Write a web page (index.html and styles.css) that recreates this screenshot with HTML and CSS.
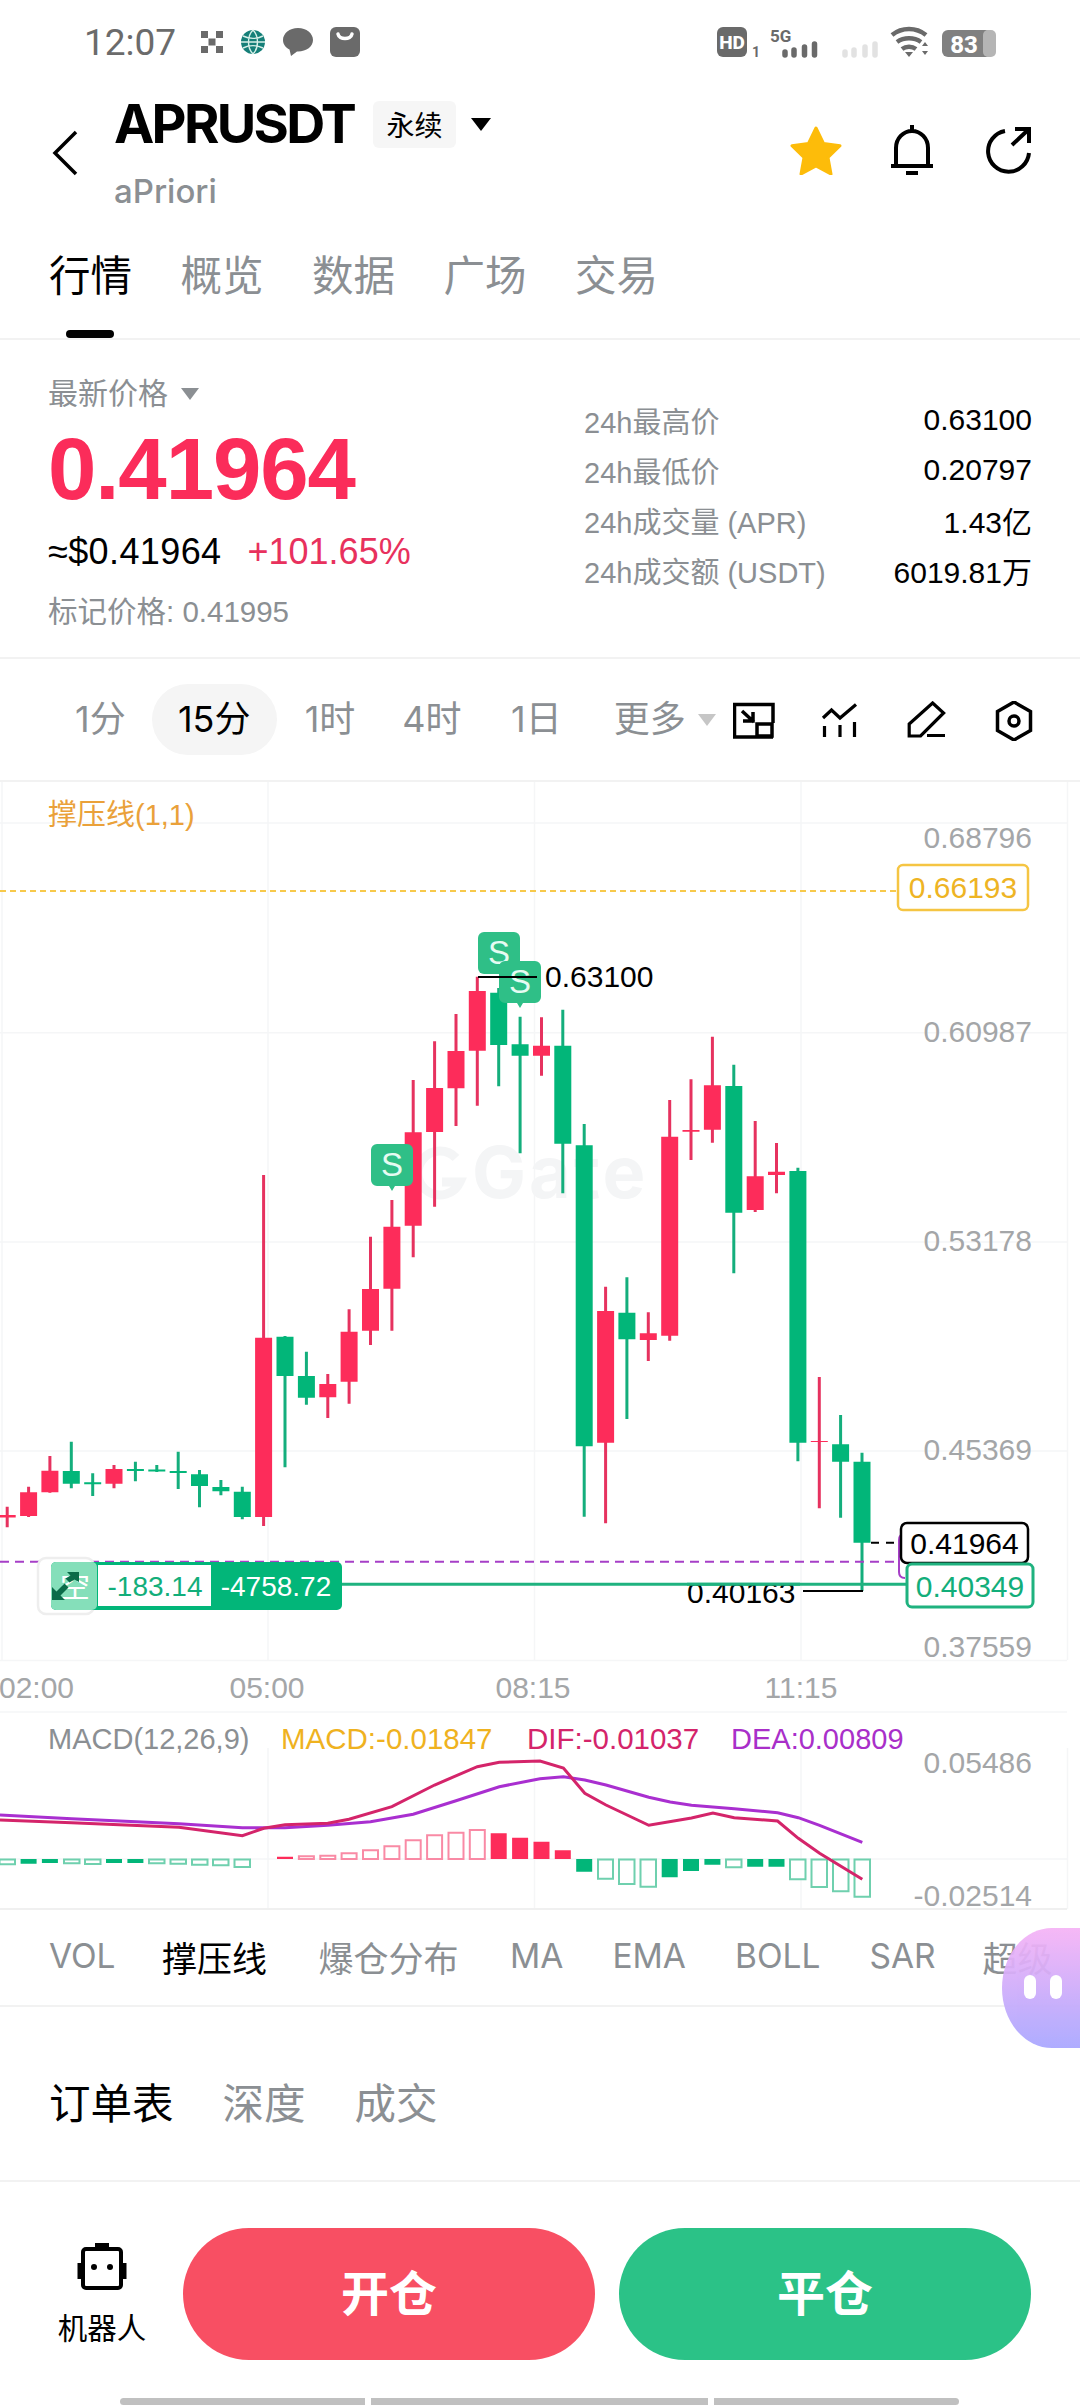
FILE: index.html
```html
<!DOCTYPE html>
<html lang="zh">
<head>
<meta charset="utf-8">
<title>APRUSDT</title>
<link rel="stylesheet" href="styles.css">
</head>
<body>
<div class="page">
  <div class="status">
    <span class="clock">12:07</span>
    <svg class="st-ic" width="24" height="24" viewBox="0 0 24 24"><path class="st-fill" d="M1 1h7v7H1zM16 1h7v7h-7zM8.500 8.500h7v7h-7zM1 16h7v7H1zM16 16h7v7h-7z"/></svg>
    <svg class="st-ic" width="26" height="26" viewBox="0 0 26 26"><circle cx="13" cy="13" r="12" class="globe"/><path class="globe-l" d="M1 13h24M13 1c-6 6-6 18 0 24M13 1c6 6 6 18 0 24M3 7c6 3 14 3 20 0M3 19c6-3 14-3 20 0"/></svg>
    <svg class="st-ic" width="32" height="32" viewBox="0 0 32 32"><path class="st-fill" d="M16 2C7.500 2 1 7.500 1 14c0 4 2.500 7.500 6.500 9.500L9 30l6-4.500h1c8.500 0 15-5 15-11.500S24.500 2 16 2z"/></svg>
    <svg class="st-ic" width="30" height="30" viewBox="0 0 30 30"><rect class="st-fill" width="30" height="30" rx="6"/><path class="st-white" d="M8 7c1 6 13 6 14 0"/></svg>
    <svg class="st-right" width="290" height="36" viewBox="0 0 290 36">
      <rect class="st-fill" x="0" y="3" width="30" height="30" rx="6"/>
      <text class="st-hd" x="15" y="25" text-anchor="middle">HD</text>
      <text class="st-sm" x="35" y="33">1</text>
      <text class="st-5g" x="53" y="18">5G</text>
      <path class="st-bar" d="M68 31v-3M77 31v-5M87.500 31v-8M97.500 31v-11"/>
      <path class="st-bar faint" d="M128 31v-3M137 31v-5M148 31v-8M158 31v-11"/>
      <path class="st-wifi" d="M175 11c10-8 24-8 34 0M180 18c7-5 17-5 24 0M185 25c4-3 10-3 14 0"/>
      <path class="st-fill" d="M192 33l-4-5h8zM205 22l3-4 3 4zM205 27l3 4 3-4z"/>
      <rect class="st-batt" x="225" y="6" width="50" height="27" rx="6"/>
      <rect class="st-batt-e" x="266" y="6" width="13" height="27" rx="5"/>
      <text class="st-pct" x="247" y="29" text-anchor="middle">83</text>
    </svg>
  </div>

  <header class="head">
    <svg class="back" width="28" height="48" viewBox="0 0 28 48"><path d="M25 3L4 24l21 21"/></svg>
    <div class="title">
      <div class="title-row">
        <span class="symbol">APRUSDT</span>
        <span class="badge">永续</span>
        <span class="caret-dark"></span>
      </div>
      <div class="coin">aPriori</div>
    </div>
    <div class="head-icons">
      <svg class="ic-star" width="54" height="50" viewBox="0 0 54 50"><path class="star" d="M27 3l7.500 15.500 16.500 2.300-12 11.700 3 16.500L27 41l-15 8 3-16.500L3 20.800l16.500-2.300z"/></svg>
      <svg class="ic-bell" width="44" height="52" viewBox="0 0 44 52"><path class="ln" d="M6 41V24a16 17 0 0 1 32 0v17M1 42h42M16 49h12M22 1v5"/></svg>
      <svg class="ic-share" width="46" height="48" viewBox="0 0 46 48"><path class="ln" d="M20 5a20.500 20.500 0 1 0 24 22M27 19L43 4M30 3h14v14"/></svg>
    </div>
  </header>

  <nav class="tabs">
    <span class="tab on">行情</span><span class="tab">概览</span><span class="tab">数据</span><span class="tab">广场</span><span class="tab">交易</span>
    <i class="tab-bar"></i>
  </nav>

  <section class="stats">
    <div class="price-col">
      <div class="latest">最新价格<span class="caret-grey"></span></div>
      <div class="price">0.41964</div>
      <div class="sub"><span class="usd">≈$0.41964</span><span class="chg">+101.65%</span></div>
      <div class="mark">标记价格: 0.41995</div>
    </div>
    <dl class="kv">
      <div class="kv-row"><dt>24h最高价</dt><dd>0.63100</dd></div>
      <div class="kv-row"><dt>24h最低价</dt><dd>0.20797</dd></div>
      <div class="kv-row"><dt>24h成交量 (APR)</dt><dd>1.43亿</dd></div>
      <div class="kv-row"><dt>24h成交额 (USDT)</dt><dd>6019.81万</dd></div>
    </dl>
  </section>

  <section class="intervals">
    <span class="iv i1">1分</span>
    <span class="iv on">15分</span>
    <span class="iv i3">1时</span>
    <span class="iv i4">4时</span>
    <span class="iv i5">1日</span>
    <span class="iv more">更多<span class="caret-light"></span></span>
    <svg class="tools" width="300" height="40" viewBox="733 701 300 40">
      <path class="tool" d="M773 723v-18.500h-38.500v32.500h38.500"/>
      <rect class="tool" x="757" y="724" width="15" height="12"/>
      <path class="tool" d="M742 711l12 11M743 721h10v-9"/>
      <path class="tool2" d="M823 718l8.500-8 8.500 8 16-13.500M824.500 726v11M840 725v12M854.500 722v15"/>
      <path class="tool2" d="M932.600 703l11 10-23 23h-11.400v-12zM927 735.500h18"/>
      <path class="tool" d="M1014 702l16.500 9.500v19l-16.500 9.500-16.500-9.500v-19z"/>
      <circle class="tool" cx="1014" cy="721" r="5"/>
    </svg>
  </section>

  <svg class="chart" width="1080" height="1127" viewBox="0 782 1080 1127">
    <path class="grid" d="M0 823H1067M0 1032.700H1067M0 1242H1067M0 1451H1067M0 1660.500H1067M0 1712H1067M2 782V1660M268 782V1660M534.500 782V1660M801 782V1660M1067.500 782V1660M268 1748V1909M534.500 1748V1909M801 1748V1909M1067.500 1748V1909M0 1859H1067"/>
    <path class="grid-b" d="M0 1909H1067"/>

    <text class="mark-wm" x="472" y="1198">Gate</text>
    <path class="wm-ring" d="M456 1158a22 22 0 1 0 4 24h-18"/>

    <text class="legend orange" x="48" y="825">撑压线(1,1)</text>
    <path class="dash-y" d="M0 891H897"/>
    <g class="ax">
      <text x="1032" y="848" text-anchor="end">0.68796</text>
      <text x="1032" y="1042" text-anchor="end">0.60987</text>
      <text x="1032" y="1251" text-anchor="end">0.53178</text>
      <text x="1032" y="1460" text-anchor="end">0.45369</text>
      <text x="1032" y="1657" text-anchor="end">0.37559</text>
      <text x="36.500" y="1698" text-anchor="middle">02:00</text>
      <text x="267" y="1698" text-anchor="middle">05:00</text>
      <text x="533" y="1698" text-anchor="middle">08:15</text>
      <text x="801" y="1698" text-anchor="middle">11:15</text>
      <text x="1032" y="1773" text-anchor="end">0.05486</text>
      <text x="1032" y="1906" text-anchor="end">-0.02514</text>
    </g>
    <rect class="lbl-y" x="898" y="865" width="130" height="45" rx="5"/>
    <text class="lbl-yt" x="963" y="898" text-anchor="middle">0.66193</text>

    <path class="wick red" d="M7.200 1506.700V1527.300M28.600 1486.700V1517M49.900 1456V1492.700M114 1465V1488.300M263.600 1175V1526M327.800 1374V1418M349.100 1309.300V1403.700M370.500 1236.700V1345M391.900 1200V1330.700M413.200 1080V1257.300M434.600 1041.300V1206.700M456 1014V1126M477.300 976.700V1105.700M541.500 1017.300V1075.700M605.600 1286.700V1523.300M648.300 1312.300V1361M669.700 1100V1340.700M691 1079.300V1160M712.400 1036.700V1142.700M755.200 1121V1212M776.500 1143V1193.300M819.300 1377V1508.300"/>
    <path class="body red" d="M7.200 1515V1517.500M28.600 1492.300V1516M49.900 1470.700V1492.300M114 1469V1483.700M263.600 1337.700V1517M327.800 1384V1397.300M349.100 1331.700V1381.700M370.500 1289V1330.700M391.900 1226.700V1288.700M413.200 1132.300V1225.700M434.600 1088V1132M456 1051V1088.300M477.300 991V1050.700M541.500 1045.700V1055.700M605.600 1311V1442.700M648.300 1333.300V1340M669.700 1136.700V1335.700M691 1130V1131.700M712.400 1085.300V1129.700M755.200 1176.300V1210M776.500 1171.700V1175M819.300 1441V1442"/>
    <path class="wick green" d="M71.300 1441.700V1488.300M92.700 1473.300V1496M135.400 1461.700V1481.300M156.800 1465V1472M178.200 1451.700V1489M199.500 1470V1507.300M220.900 1480V1495.300M242.300 1486.700V1519.300M285 1336V1467.300M306.400 1351.700V1404.700M498.700 988V1086.300M520.100 1016.700V1153.300M562.800 1009.700V1193.300M584.200 1124V1516.700M626.900 1277.300V1419M733.800 1064.700V1273.300M797.900 1167.700V1461.300M840.600 1415V1517.700M862 1452.700V1591"/>
    <path class="body green" d="M71.300 1471V1483.700M92.700 1482.300V1484.300M135.400 1469V1471M156.800 1469.500V1471.500M178.200 1471V1473M199.500 1474.300V1486M220.900 1487V1491.300M242.300 1491.700V1517M285 1336.700V1376M306.400 1376V1397.700M498.700 992.700V1045M520.100 1044.300V1055.700M562.800 1045.700V1143.700M584.200 1145.300V1446.300M626.900 1312.700V1339.300M733.800 1086V1212.700M797.900 1171V1442.700M840.600 1444.300V1461.700M862 1461.700V1542.700"/>

    <path class="sig" d="M371 1150a6 6 0 0 1 6-6h30a6 6 0 0 1 6 6v30a6 6 0 0 1-6 6h-12l-3 5-3-5h-12a6 6 0 0 1-6-6z"/>
    <text class="sig-t" x="392" y="1176" text-anchor="middle">S</text>
    <path class="sig" d="M478 938a6 6 0 0 1 6-6h30a6 6 0 0 1 6 6v30a6 6 0 0 1-6 6h-30a6 6 0 0 1-6-6z"/>
    <text class="sig-t" x="499" y="964" text-anchor="middle">S</text>
    <path class="sig" d="M499 967a6 6 0 0 1 6-6h30a6 6 0 0 1 6 6v30a6 6 0 0 1-6 6h-12l-3 5-3-5h-12a6 6 0 0 1-6-6z"/>
    <text class="sig-t" x="520" y="993" text-anchor="middle">S</text>
    <path class="hi-line" d="M478 977H537"/>
    <text class="blk" x="545" y="987">0.63100</text>

    <path class="dash-p" d="M0 1561.700H898"/>
    <path class="br-p" d="M905 1534q-6 0-6 6v32q0 6 6 6"/>
    <path class="pos-line" d="M340 1584.300H906"/>
    <path class="hi-line" d="M803 1591H863"/>
    <text class="blk" x="687" y="1603">0.40163</text>
    <path class="pos-line" d="M687 1584.300H800"/>
    <path class="dash-k" d="M871 1542.700H900"/>
    <rect class="lbl-k" x="901" y="1523" width="127" height="40" rx="6"/>
    <text class="blk" x="964.500" y="1554" text-anchor="middle">0.41964</text>
    <rect class="lbl-g" x="907" y="1564" width="126" height="43" rx="5"/>
    <text class="lbl-gt" x="970" y="1597" text-anchor="middle">0.40349</text>

    <rect class="tag-halo" x="38" y="1558" width="56" height="56" rx="8"/>
    <rect class="tag" x="51" y="1562" width="291" height="48" rx="5"/>
    <rect class="tag-l" x="51" y="1562" width="46" height="48" rx="5"/>
    <rect class="tag-w" x="98" y="1565" width="113" height="41"/>
    <text class="tag-k" x="75" y="1597" text-anchor="middle">空</text>
    <text class="tag-a" x="155" y="1596" text-anchor="middle">-183.14</text>
    <text class="tag-b" x="276" y="1596" text-anchor="middle">-4758.72</text>
    <path class="tag-ar" d="M52 1600v-13l4.500 4.500 8-8 4 4-8 8 4.500 4.500z"/>
    <path class="tag-ar2" d="M79 1582v-10H67l3.500 3.500-5 3 4 4 5-3z"/>

    <text class="legend grey" x="48" y="1749">MACD(12,26,9)</text>
    <text class="legend m-o" x="281" y="1749">MACD:-0.01847</text>
    <text class="legend m-p" x="527" y="1749">DIF:-0.01037</text>
    <text class="legend m-v" x="731" y="1749">DEA:0.00809</text>

    <path class="hg" d="M-.500 1859.500H15V1864.300H-.500ZM64 1859.500H79.500V1863.300H64ZM85 1859.500H100.500V1864H85ZM149 1859.500H164.500V1863.300H149ZM170.500 1859.500H186V1863.700H170.500ZM192 1859.500H207.500V1864.700H192ZM213 1859.500H228.500V1865.300H213ZM234.500 1859.500H250V1867H234.500ZM598 1859.500H613V1878.700H598ZM619 1859.500H634.500V1884H619ZM640.500 1859.500H656V1886.700H640.500ZM726 1859.500H741.500V1867.300H726ZM790 1859.500H805.500V1879.300H790ZM811.500 1859.500H827V1887H811.500ZM833 1859.500H848.500V1891.300H833ZM854.500 1859.500H870V1896.700H854.500Z"/>
    <path class="mf green" d="M28.600 1859V1863.700M49.900 1859V1863M114 1859V1863M135.400 1859V1863M584.200 1859V1871.700M669.700 1859V1877.300M691 1859V1871M712.400 1859V1864.700M755.200 1859V1866.700M776.500 1859V1866.700"/>
    <path class="hr" d="M298.900 1859H313.900V1856.300H298.900ZM320.300 1859H335.300V1855.700H320.300ZM341.600 1859H356.600V1853.300H341.600ZM363 1859H378V1850.300H363ZM384.400 1859H399.400V1846.300H384.400ZM405.700 1859H420.700V1840.300H405.700ZM427.100 1859H442.100V1835.300H427.100ZM448.500 1859H463.500V1832.700H448.500ZM469.800 1859H484.800V1830H469.800Z"/>
    <path class="mf red" d="M285 1859V1856.700M498.700 1859V1833.300M520.100 1859V1837.700M541.500 1859V1841.700M562.800 1859V1850.300"/>
    <polyline class="dea" points="0,1815 71.600,1818.700 179,1823.700 242.400,1827.700 285,1827.700 327.800,1825.300 370.500,1821.700 413.200,1814.300 456,1800.700 499.300,1786.700 540,1778.700 563.400,1776.700 584.800,1780 606,1785 648.800,1797.300 670.200,1802 691.500,1805.300 734.200,1808.700 777.600,1812.700 798.300,1817.700 819.600,1825.300 862.300,1842.300"/>
    <polyline class="dif" points="0,1820 71.600,1822.700 179,1827.300 242.400,1835.700 263.800,1828.300 285,1824.700 327.800,1823.300 349,1819.300 391.900,1806.700 434.600,1785 477.300,1766.700 499.300,1762.300 540,1761 563.400,1768 584.800,1793.300 606,1805 648.800,1825.300 691.500,1818 712.900,1813 734.200,1817.700 777.600,1821 798.300,1838.300 819.600,1853.300 862.300,1879.300"/>
  </svg>

  <nav class="inds">
    <span class="ind lat">VOL</span><span class="ind on">撑压线</span><span class="ind wide">爆仓分布</span><span class="ind lat wide">MA</span><span class="ind lat">EMA</span><span class="ind lat">BOLL</span><span class="ind lat">SAR</span><span class="ind last">超级</span>
  </nav>

  <nav class="orders">
    <span class="otab on">订单表</span><span class="otab">深度</span><span class="otab">成交</span>
  </nav>

  <footer class="actions">
    <div class="robot">
      <svg width="50" height="50" viewBox="0 0 50 50"><path class="rb-a" d="M18 2h14v4H18z"/><rect class="rb" x="6" y="8" width="38" height="39" rx="3"/><path class="rb-e" d="M3 22v16M47 22v16"/><circle class="rb-a" cx="17" cy="26" r="3"/><circle class="rb-a" cx="33" cy="26" r="3"/></svg>
      <span class="robot-t">机器人</span>
    </div>
    <button class="btn open">开仓</button>
    <button class="btn close">平仓</button>
  </footer>

  <div class="navbar"><i class="seg s1"></i><i class="seg s2"></i><i class="seg s3"></i></div>

  <div class="blob"><i class="eye"></i><i class="eye"></i></div>
</div>
</body>
</html>
```
FILE: styles.css
```css
* { box-sizing: border-box; margin: 0; padding: 0; }
html, body { width: 1080px; height: 2408px; overflow: hidden; background: #fff; }
body { font-family: "Liberation Sans", "Noto Sans CJK SC", sans-serif; color: #000; }
.page { position: relative; width: 1080px; height: 2408px; overflow: hidden; display: flex; flex-direction: column; }

/* status bar */
.status { height: 85px; display: flex; align-items: center; padding: 0 73px 1px 84px; }
.clock { font-size: 37px; color: #6b6b6b; width: 116px; font-family: Roboto, sans-serif; }
.st-ic { flex: none; margin-right: 16px; }
.st-fill { fill: #6a6a6a; }
.st-white { fill: none; stroke: #fff; stroke-width: 3.5; stroke-linecap: round; }
.globe { fill: #157f78; }
.globe-l { fill: none; stroke: #d6efe8; stroke-width: 1.4; }
.st-right { margin-left: auto; flex: none; }
.st-hd { font: 800 19px Roboto, sans-serif; fill: #fff; }
.st-sm { font: 700 14px Roboto, sans-serif; fill: #6a6a6a; }
.st-5g { font: 700 17px Roboto, sans-serif; fill: #6a6a6a; }
.st-bar { stroke: #6a6a6a; stroke-width: 5.500; stroke-linecap: round; fill: none; }
.st-bar.faint { stroke: #e2e2e2; }
.st-wifi { stroke: #6a6a6a; stroke-width: 4.500; fill: none; }
.st-batt { fill: #808080; }
.st-batt-e { fill: #b5b5b5; }
.st-pct { font: 800 24px Roboto, sans-serif; fill: #fff; }

/* header */
.head { height: 125px; display: flex; position: relative; }
.back { margin: 44px 0 0 51px; flex: none; }
.back path { fill: none; stroke: #000; stroke-width: 3.500; }
.title { margin-left: 35px; padding-top: 13px; }
.title-row { display: flex; align-items: center; height: 52px; }
.symbol { font-family: Inter, sans-serif; font-size: 54px; font-weight: 700; letter-spacing: -2.700px; line-height: 52px; }
.badge { margin-left: 19px; width: 83px; height: 47px; border-radius: 6px; background: #f6f6f6; font-size: 28px; display: flex; align-items: center; justify-content: center; }
.caret-dark { margin-left: 15px; border: 10px solid transparent; border-top: 13px solid #000; border-bottom: 0; }
.coin { font-family: Inter, sans-serif; margin-top: 22px; font-size: 33px; line-height: 38px; color: #8b8f93; font-weight: 500; }
.head-icons { margin-left: auto; display: flex; align-items: center; padding: 40px 49px 36px 0; height: 125px; }
.ic-bell { margin-left: 47px; }
.ic-share { margin-left: 51px; }
.star { fill: #fdbc0a; stroke: #fdbc0a; stroke-width: 3; stroke-linejoin: round; }
.ln { fill: none; stroke: #000; stroke-width: 4; }

/* tabs */
.tabs { height: 130px; display: flex; gap: 48.500px; padding: 43px 0 0 49px; position: relative; border-bottom: 2px solid #f2f2f2; }
.tab { font-size: 41.500px; line-height: 47px; height: 47px; color: #8b8f93; }
.tab.on { color: #000; }
.tab-bar { position: absolute; left: 66px; bottom: 0; width: 48px; height: 8px; border-radius: 4px; background: #000; }

/* stats */
.stats { height: 319px; display: flex; border-bottom: 2px solid #f2f2f2; padding: 0 48px 0 48px; }
.price-col { width: 536px; padding-top: 36px; }
.latest { font-size: 30px; line-height: 36px; color: #8b8f93; display: flex; align-items: center; }
.caret-grey { margin-left: 13px; border: 9px solid transparent; border-top: 12px solid #8b8f93; border-bottom: 0; }
.price { margin-top: 7px; font-size: 87px; font-weight: 700; letter-spacing: -1.100px; line-height: 100px; color: #fb2c5a; }
.sub { margin-top: 12px; display: flex; gap: 26px; font-size: 36px; line-height: 42px; }
.usd { letter-spacing: .4px; }
.chg { color: #e8315d; }
.mark { margin-top: 21px; font-size: 29.500px; line-height: 36px; color: #8b8f93; }
.kv { flex: 1; padding-top: 55px; }
.kv-row { height: 50px; display: flex; justify-content: space-between; align-items: center; font-size: 29.500px; }
.kv-row dt { color: #8b8f93; font-size: 29px; }
.kv-row dd { color: #000; font-size: 30px; }

/* intervals */
.intervals { height: 123px; display: flex; align-items: center; position: relative; padding-left: 75px; border-bottom: 2px solid #f2f2f2; font: 36px Inter, "Noto Sans CJK SC", sans-serif; color: #8b8f93; }
.iv { line-height: 71px; flex: none; }
.iv.on { margin-left: 26px; width: 125px; height: 71px; border-radius: 36px; background: #f5f5f5; color: #000; text-align: center; }
.i3 { margin-left: 28px; }
.i4 { margin-left: 47px; }
.i5 { margin-left: 49.500px; }
.more { margin-left: 52px; display: flex; align-items: center; }
.caret-light { margin-left: 12px; border: 9px solid transparent; border-top: 12px solid #c6c6c6; border-bottom: 0; }
.tools { position: absolute; left: 733px; top: 42px; }
.tool { fill: none; stroke: #000; stroke-width: 3.500; }
.tool2 { fill: none; stroke: #000; stroke-width: 3.200; }

/* chart */
.chart { display: block; flex: none; overflow: visible; }
.chart text { font-family: "Liberation Sans", "Noto Sans CJK SC", sans-serif; }
.grid { stroke: #f5f6f7; stroke-width: 1.500; fill: none; }
.grid-b { stroke: #f0f0f0; stroke-width: 2; }
.chart .mark-wm { font-family: Inter, sans-serif; font-size: 72px; font-weight: 700; fill: #f4f5f6; letter-spacing: 3px; }
.wm-ring { fill: none; stroke: #f4f5f6; stroke-width: 9; }
.legend { font-size: 29px; }
.orange { fill: #eaa13a; }
.grey { fill: #8b8f93; }
.m-o { fill: #efb21f; font-size: 29.500px; }
.m-p { fill: #d4246a; font-size: 29.500px; }
.m-v { fill: #a92fc9; }
.dash-y { stroke: #f7c94b; stroke-width: 2; stroke-dasharray: 6 4; }
.ax text { font-size: 30px; fill: #a4a6a8; }
.lbl-y { fill: #fff; stroke: #f5c543; stroke-width: 2.500; }
.lbl-yt { font-size: 30px; fill: #eeb424; }
.wick { fill: none; stroke-width: 3; }
.wick.red { stroke: #e6325f; }
.wick.green { stroke: #14ae7c; }
.body { fill: none; stroke-width: 17; }
.body.red { stroke: #fd2c5a; }
.body.green { stroke: #02b679; }
.sig { fill: #2fbf87; }
.sig-t { font-size: 33px; fill: #e6fbf2; }
.hi-line { stroke: #000; stroke-width: 2; fill: none; }
.blk { font-size: 30px; fill: #000; }
.dash-p { stroke: #a63fc7; stroke-width: 2; stroke-dasharray: 9 6; }
.br-p { fill: none; stroke: #a63fc7; stroke-width: 2; }
.pos-line { stroke: #1fb27f; stroke-width: 3; }
.dash-k { stroke: #000; stroke-width: 2; stroke-dasharray: 8 7; }
.lbl-k { fill: #fff; stroke: #000; stroke-width: 2.500; }
.lbl-g { fill: #fff; stroke: #1fb27f; stroke-width: 3; }
.lbl-gt { font-size: 30px; fill: #12ae7a; }
.tag-halo { fill: #fff; stroke: #eeeeee; stroke-width: 2.500; }
.tag { fill: #02b679; }
.tag-l { fill: #85dfba; }
.tag-w { fill: #fff; }
.tag-k { font-size: 30px; fill: #fff; }
.tag-a { font-size: 28px; fill: #12ae7a; }
.tag-b { font-size: 28px; fill: #fff; }
.tag-ar { fill: #0a6b49; }
.tag-ar2 { fill: #0a6b49; }
.hg { fill: #fff; stroke: #6fd0ae; stroke-width: 2; }
.hr { fill: #fff; stroke: #f98aa5; stroke-width: 2; }
.mf { fill: none; stroke-width: 16; }
.mf.red { stroke: #fd2c5a; }
.mf.green { stroke: #02b679; }
.dea { fill: none; stroke: #a92fd0; stroke-width: 3; }
.dif { fill: none; stroke: #d4246a; stroke-width: 3; }

/* indicators */
.inds { height: 98px; display: flex; align-items: center; gap: 49px; padding: 0 0 2px 49px; font: 35px Inter, "Noto Sans CJK SC", sans-serif; color: #8b8f93; border-bottom: 2px solid #f2f2f2; white-space: nowrap; }
.ind.lat { font-size: 33.500px; }
.ind.on { color: #000; margin-left: -2.500px; }
.ind.wide { margin-left: 2.500px; }
.ind.last { margin-left: -2px; }

/* orders */
.orders { height: 175px; display: flex; align-items: center; gap: 49px; padding: 14px 0 0 49px; font-size: 41.500px; color: #8b8f93; border-bottom: 2px solid #f2f2f2; }
.otab.on { color: #000; }

/* actions */
.actions { height: 216px; display: flex; align-items: flex-start; padding: 46px 48px 0 0; }
.robot { width: 183px; flex: none; display: flex; flex-direction: column; align-items: center; padding: 13px 0 0 21px; }
.rb { fill: #fff; stroke: #000; stroke-width: 4; }
.rb-a { fill: #000; }
.rb-e { stroke: #000; stroke-width: 5; }
.robot-t { font-size: 29.500px; margin-top: 20px; line-height: 36px; }
.btn { border: 0; height: 132px; border-radius: 66px; color: #fff; font: 700 48px "Noto Sans CJK SC", sans-serif; flex: none; width: 412px; padding-bottom: 8px; }
.open { background: #f84f63; }
.close { background: #2bc287; margin-left: 24px; }

/* nav bar */
.navbar { display: flex; gap: 6px; padding-left: 120px; height: 7px; }
.seg { display: block; height: 7px; background: #c0c0c0; }
.s1 { width: 245px; border-radius: 4px 0 0 4px; }
.s2 { width: 337px; }
.s3 { width: 245px; border-radius: 0 4px 4px 0; }

/* floating */
.blob { position: absolute; left: 1002px; top: 1928px; width: 110px; height: 120px; border-radius: 50px 0 0 50px / 60px 0 0 60px; background: linear-gradient(#f6b3f6, #a8a6ff); opacity: .93; display: flex; gap: 14px; padding: 47px 0 0 22px; }
.eye { display: block; width: 12px; height: 24px; border-radius: 6px; background: #fff; }
```
